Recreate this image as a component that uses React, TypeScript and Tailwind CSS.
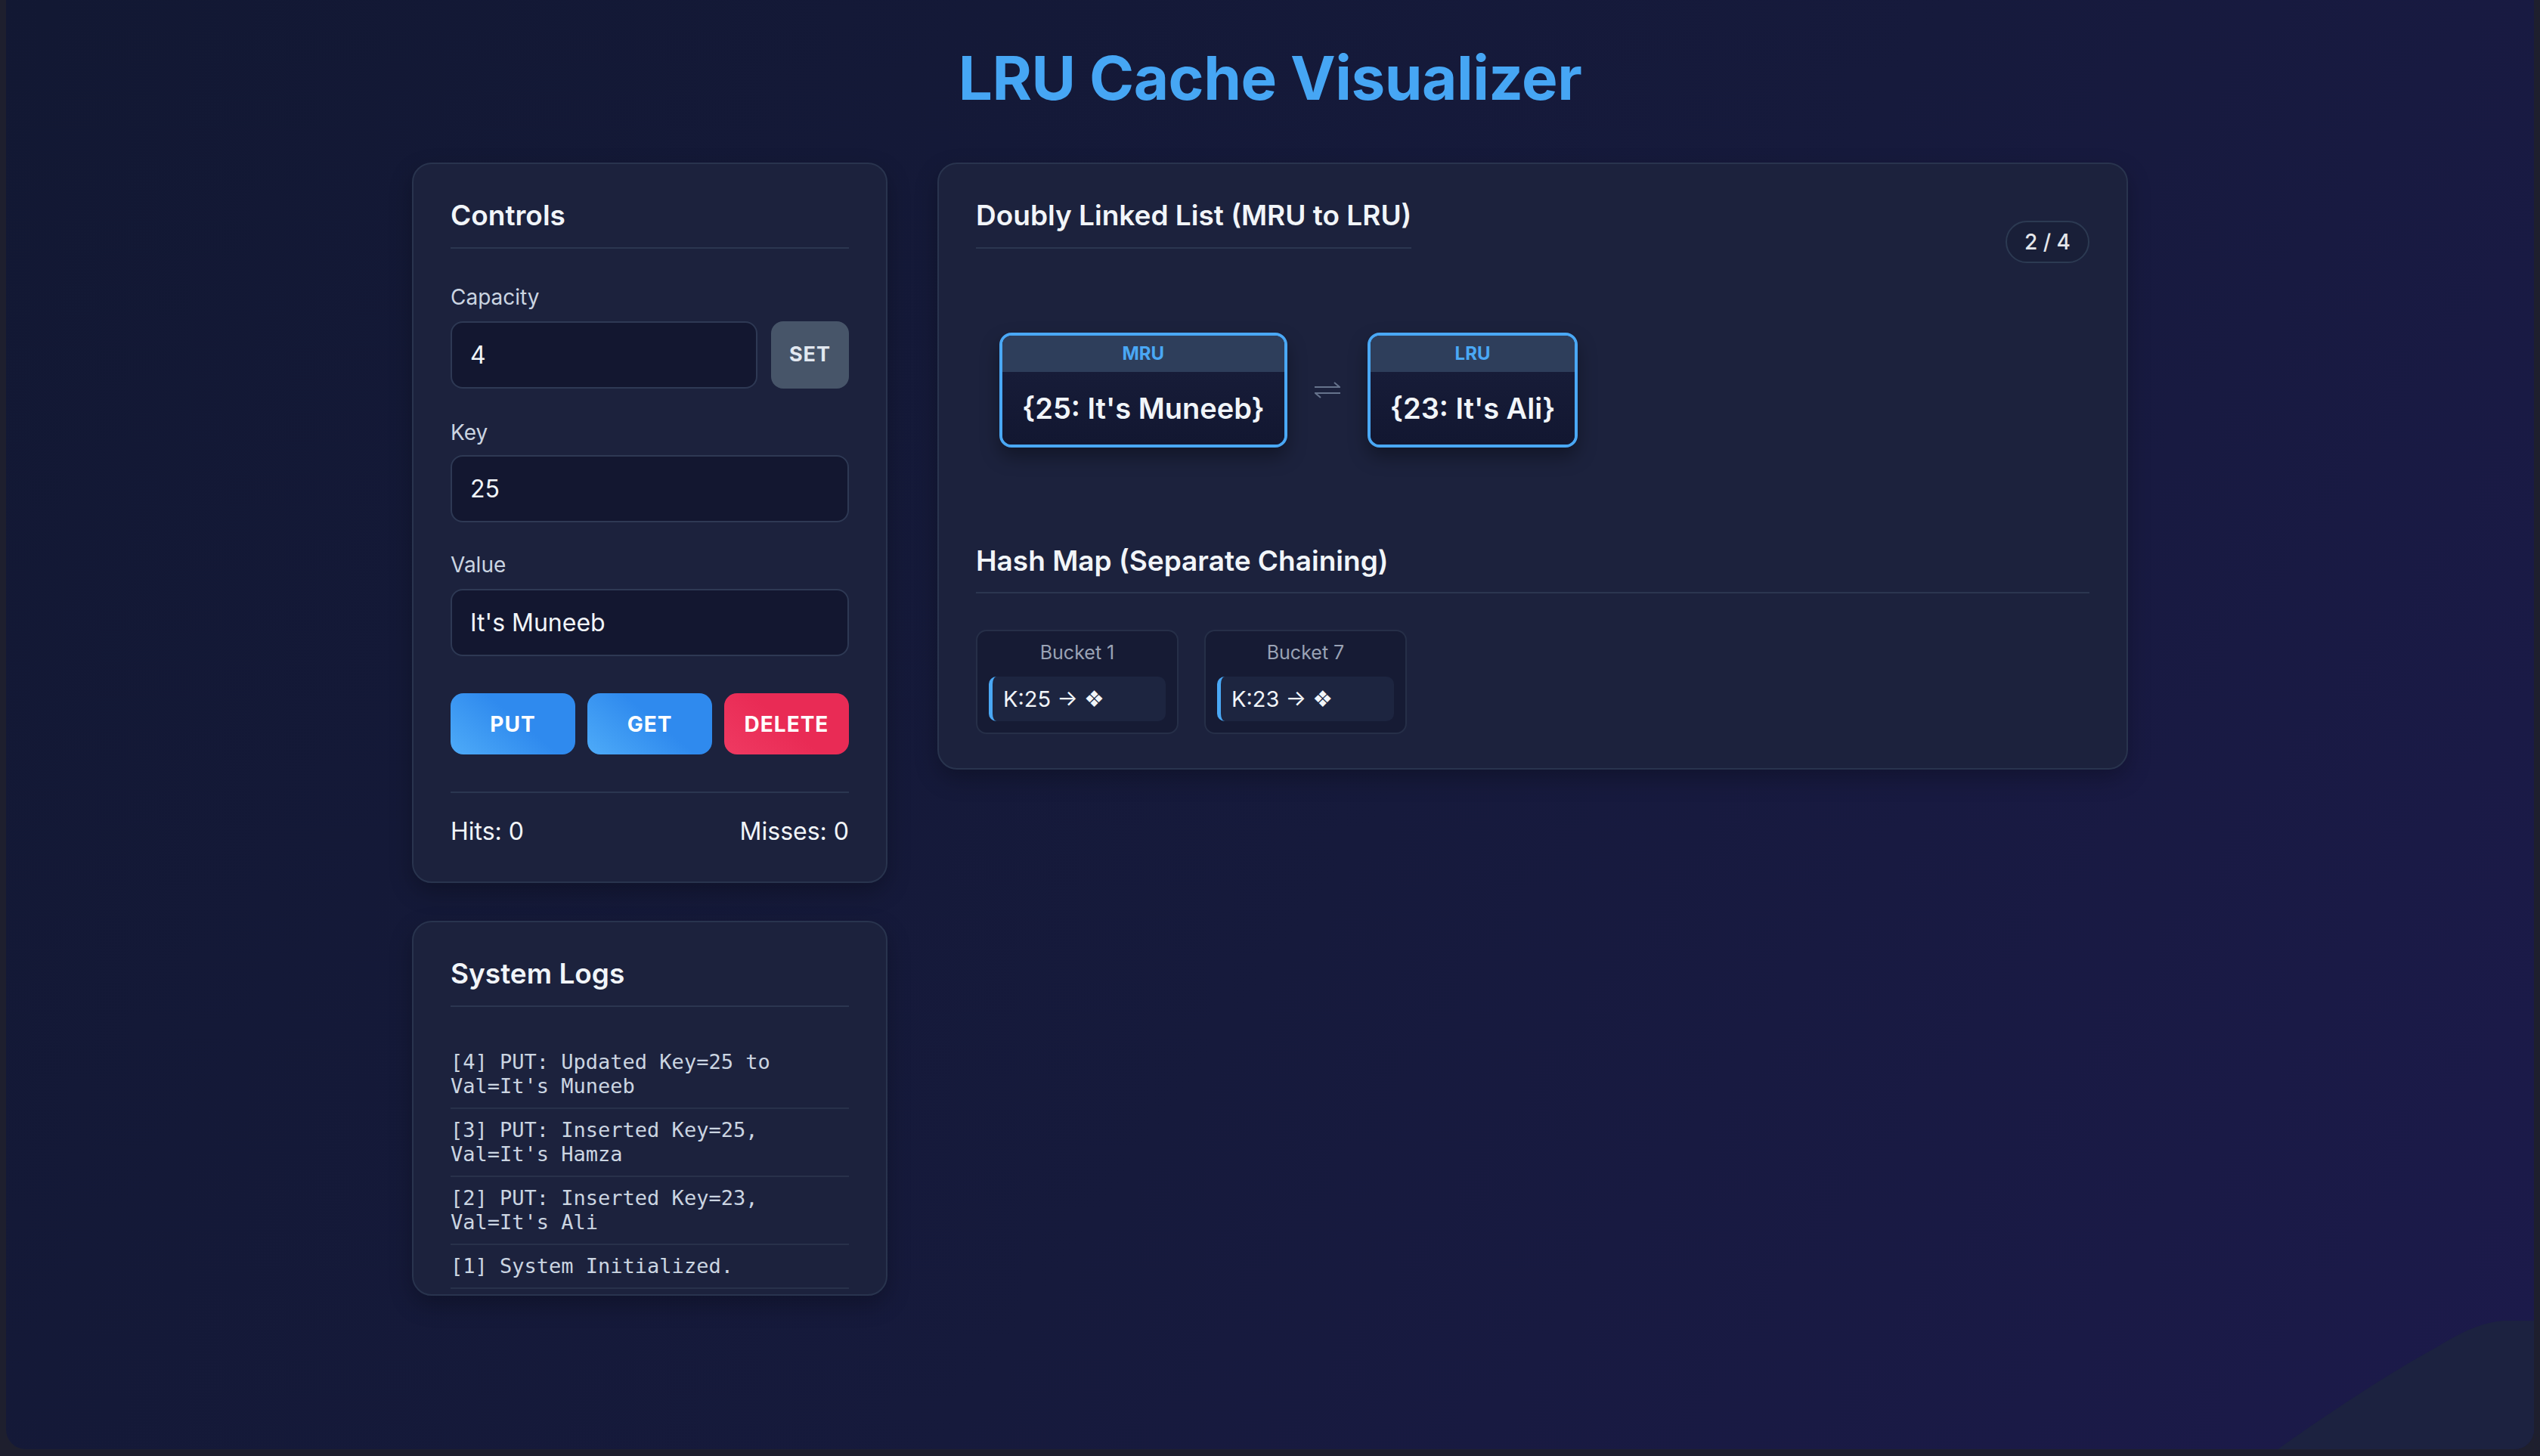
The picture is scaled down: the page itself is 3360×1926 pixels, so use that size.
import { useState } from "react";

type Entry = { key: number; value: string };
type LogLine = { id: number; text: string };

const BUCKET_COUNT = 8;

export default function App() {
	const [capacity, setCapacity] = useState(4);
	const [capacityInput, setCapacityInput] = useState("4");
	const [keyInput, setKeyInput] = useState("25");
	const [valueInput, setValueInput] = useState("It's Muneeb");
	// most recently used first
	const [entries, setEntries] = useState<Entry[]>([
		{ key: 25, value: "It's Muneeb" },
		{ key: 23, value: "It's Ali" },
	]);
	const [hits, setHits] = useState(0);
	const [misses, setMisses] = useState(0);
	const [logs, setLogs] = useState<LogLine[]>([
		{ id: 4, text: "PUT: Updated Key=25 to Val=It's Muneeb" },
		{ id: 3, text: "PUT: Inserted Key=25, Val=It's Hamza" },
		{ id: 2, text: "PUT: Inserted Key=23, Val=It's Ali" },
		{ id: 1, text: "System Initialized." },
	]);

	const addLog = (text: string) => {
		setLogs((prev) => [{ id: (prev[0]?.id ?? 0) + 1, text }, ...prev]);
	};

	const handleSetCapacity = () => {
		const next = parseInt(capacityInput, 10);
		if (!next || next < 1) return;
		setCapacity(next);
		setEntries((prev) => prev.slice(0, next));
		addLog(`SET: Capacity=${next}`);
	};

	const handlePut = () => {
		const key = parseInt(keyInput, 10);
		if (isNaN(key)) return;
		const exists = entries.some((e) => e.key === key);
		let next = [{ key, value: valueInput }, ...entries.filter((e) => e.key !== key)];
		if (next.length > capacity) {
			const evicted = next[next.length - 1];
			next = next.slice(0, capacity);
			addLog(`EVICT: Key=${evicted.key}`);
		}
		setEntries(next);
		addLog(
			exists
				? `PUT: Updated Key=${key} to Val=${valueInput}`
				: `PUT: Inserted Key=${key}, Val=${valueInput}`
		);
	};

	const handleGet = () => {
		const key = parseInt(keyInput, 10);
		const found = entries.find((e) => e.key === key);
		if (found) {
			setHits((h) => h + 1);
			setEntries([found, ...entries.filter((e) => e.key !== key)]);
			addLog(`GET: Hit Key=${key}, Val=${found.value}`);
		} else {
			setMisses((m) => m + 1);
			addLog(`GET: Miss Key=${key}`);
		}
	};

	const handleDelete = () => {
		const key = parseInt(keyInput, 10);
		setEntries((prev) => prev.filter((e) => e.key !== key));
		addLog(`DELETE: Key=${key}`);
	};

	const buckets = Array.from({ length: BUCKET_COUNT }, (_, i) => ({
		index: i,
		items: entries.filter((e) => ((e.key % BUCKET_COUNT) + BUCKET_COUNT) % BUCKET_COUNT === i),
	})).filter((b) => b.items.length > 0);

	return (
		<div className="min-h-screen bg-[#1e1f2e] px-[8px] pb-[9px] font-['Inter',sans-serif]">
			<div className="relative min-h-[1917px] overflow-hidden rounded-b-[26px] bg-[linear-gradient(125deg,#121833_0%,#161a3c_55%,#1c1a4b_100%)]">
				{/* decorative corner shape */}
				<svg
					className="absolute right-0 bottom-0"
					width="350"
					height="175"
					viewBox="0 0 350 175"
				>
					<path
						d="M11,175 C60,140 150,80 200,52 C240,30 270,8 310,5 L350,5 L350,175 Z"
						fill="#1c2240"
					/>
				</svg>

				<div className="relative mx-auto w-[2270px] pt-[54px]">
					<h1 className="text-center text-[80px] leading-[98px] font-bold tracking-[-0.5px] text-[#46a6f4]">
						LRU Cache Visualizer
					</h1>

					<div className="mt-[63px] flex items-start gap-[66px]">
						{/* left column */}
						<div className="flex w-[629px] shrink-0 flex-col gap-[50px]">
							<div className="rounded-[26px] border-2 border-[#29344e] bg-[#1c223d] px-[49px] pt-[46px] pb-[42px] shadow-[0_12px_30px_rgba(0,0,0,0.25)]">
								<h2 className="border-b-2 border-[#2b3650] pb-[20px] text-[37px] leading-[44px] font-semibold text-[#f1f5f9]">
									Controls
								</h2>

								<label className="mt-[42px] mb-[9px] block text-[28px] leading-[45px] text-[#cbd5e1]">
									Capacity
								</label>
								<div className="flex gap-[18px]">
									<input
										value={capacityInput}
										onChange={(e) => setCapacityInput(e.target.value)}
										className="h-[89px] min-w-0 flex-1 rounded-[16px] border-2 border-[#2e3954] bg-[#131730] px-[24px] text-[32px] text-[#f1f5f9] outline-none"
									/>
									<button
										onClick={handleSetCapacity}
										className="h-[89px] w-[103px] rounded-[16px] bg-[#475569] text-[27px] font-bold tracking-[1px] text-[#e2e8f0]"
									>
										SET
									</button>
								</div>

								<label className="mt-[36px] mb-[7px] block text-[28px] leading-[45px] text-[#cbd5e1]">
									Key
								</label>
								<input
									value={keyInput}
									onChange={(e) => setKeyInput(e.target.value)}
									className="h-[89px] w-full rounded-[16px] border-2 border-[#2e3954] bg-[#131730] px-[24px] text-[32px] text-[#f1f5f9] outline-none"
								/>

								<label className="mt-[34px] mb-[9px] block text-[28px] leading-[45px] text-[#cbd5e1]">
									Value
								</label>
								<input
									value={valueInput}
									onChange={(e) => setValueInput(e.target.value)}
									className="h-[89px] w-full rounded-[16px] border-2 border-[#2e3954] bg-[#131730] px-[24px] text-[32px] text-[#f1f5f9] outline-none"
								/>

								<div className="mt-[49px] grid grid-cols-3 gap-[16px]">
									<button
										onClick={handlePut}
										className="h-[81px] rounded-[17px] bg-[linear-gradient(40deg,#4eabf8_0%,#2f8aee_55%)] text-[28px] font-bold tracking-[1px] text-white"
									>
										PUT
									</button>
									<button
										onClick={handleGet}
										className="h-[81px] rounded-[17px] bg-[linear-gradient(40deg,#4eabf8_0%,#2f8aee_55%)] text-[28px] font-bold tracking-[1px] text-white"
									>
										GET
									</button>
									<button
										onClick={handleDelete}
										className="h-[81px] rounded-[17px] bg-[linear-gradient(40deg,#ef3a62_0%,#e92b55_50%)] text-[28px] font-bold tracking-[1px] text-white"
									>
										DELETE
									</button>
								</div>

								<div className="mt-[49px] flex justify-between border-t-2 border-[#2b3650] pt-[27px] text-[32px] leading-[48px] text-[#f1f5f9]">
									<span>Hits: {hits}</span>
									<span>Misses: {misses}</span>
								</div>
							</div>

							<div className="rounded-[26px] border-2 border-[#29344e] bg-[#1c223d] px-[49px] pt-[46px] pb-[7px] shadow-[0_12px_30px_rgba(0,0,0,0.25)]">
								<h2 className="border-b-2 border-[#2b3650] pb-[20px] text-[37px] leading-[44px] font-semibold text-[#f1f5f9]">
									System Logs
								</h2>
								<div className="mt-[45px]">
									{logs.slice(0, 4).map((log) => (
										<div
											key={log.id}
											className="border-b-2 border-[#28314a] py-[12px] font-['DejaVu_Sans_Mono',monospace] text-[27px] leading-[32px] text-[#cbd5e1]"
										>
											[{log.id}] {log.text}
										</div>
									))}
								</div>
							</div>
						</div>

						{/* right column */}
						<div className="flex-1 rounded-[26px] border-2 border-[#29344e] bg-[#1c223d] px-[49px] pt-[46px] pb-[45px] shadow-[0_12px_30px_rgba(0,0,0,0.25)]">
							<div className="flex items-start justify-between">
								<h2 className="inline-block border-b-2 border-[#2b3650] pb-[20px] text-[37px] leading-[44px] font-semibold text-[#f1f5f9]">
									Doubly Linked List (MRU to LRU)
								</h2>
								<span className="mt-[29px] flex h-[56px] w-[111px] items-center justify-center rounded-full border-2 border-[#2c3a52] bg-[#191f38] text-[28px] font-medium text-[#e5e7eb]">
									{entries.length} / {capacity}
								</span>
							</div>

							<div className="mt-[92px] flex items-center pl-[31px]">
								{entries.map((entry, i) => (
									<div key={entry.key} className="flex items-center">
										{i > 0 && (
											<svg width="34" height="22" viewBox="0 0 34 22" className="mx-[36px]">
												<path
													d="M0,7 H33 L26,1 M34,15 H1 L8,21"
													fill="none"
													stroke="#66738c"
													strokeWidth="2"
												/>
											</svg>
										)}
										<div className="overflow-hidden rounded-[16px] border-4 border-[#4aa8f5] bg-[#151a35] shadow-[0_12px_24px_rgba(0,0,0,0.35)]">
											<div className="flex h-[48px] items-center justify-center bg-[#2e3e5b] text-[24px] font-bold text-[#4aa8f5]">
												{i === 0 ? "MRU" : i === entries.length - 1 ? "LRU" : ""}
											</div>
											<div className="flex h-[96px] items-center justify-center bg-[linear-gradient(180deg,#171c38_0%,#121731_100%)] px-[26px] text-[38px] font-semibold whitespace-nowrap text-[#f1f5f9]">
												{`{${entry.key}: ${entry.value}}`}
											</div>
										</div>
									</div>
								))}
							</div>

							<h2 className="mt-[128px] border-b-2 border-[#2b3650] pb-[19px] text-[37px] leading-[44px] font-semibold text-[#f1f5f9]">
								Hash Map (Separate Chaining)
							</h2>

							<div className="mt-[48px] flex gap-[34px]">
								{buckets.map((bucket) => (
									<div
										key={bucket.index}
										className="w-[268px] rounded-[14px] border-2 border-[#262f48] bg-[#161b34] px-[15px] pt-[10px] pb-[15px]"
									>
										<div className="mb-[13px] text-center text-[25px] leading-[37px] text-[#9aa3b5]">
											Bucket {bucket.index}
										</div>
										{bucket.items.map((item) => (
											<div
												key={item.key}
												className="flex h-[59px] items-center rounded-[10px] border-l-[5px] border-[#4aa8f5] bg-[#1d2540] pl-[14px] text-[29px] text-[#f1f5f9]"
											>
												K:{item.key} → <span className="ml-[8px] font-['DejaVu_Sans',sans-serif] text-[30px] leading-none">❖</span>
											</div>
										))}
									</div>
								))}
							</div>
						</div>
					</div>
				</div>
			</div>
		</div>
	);
}
